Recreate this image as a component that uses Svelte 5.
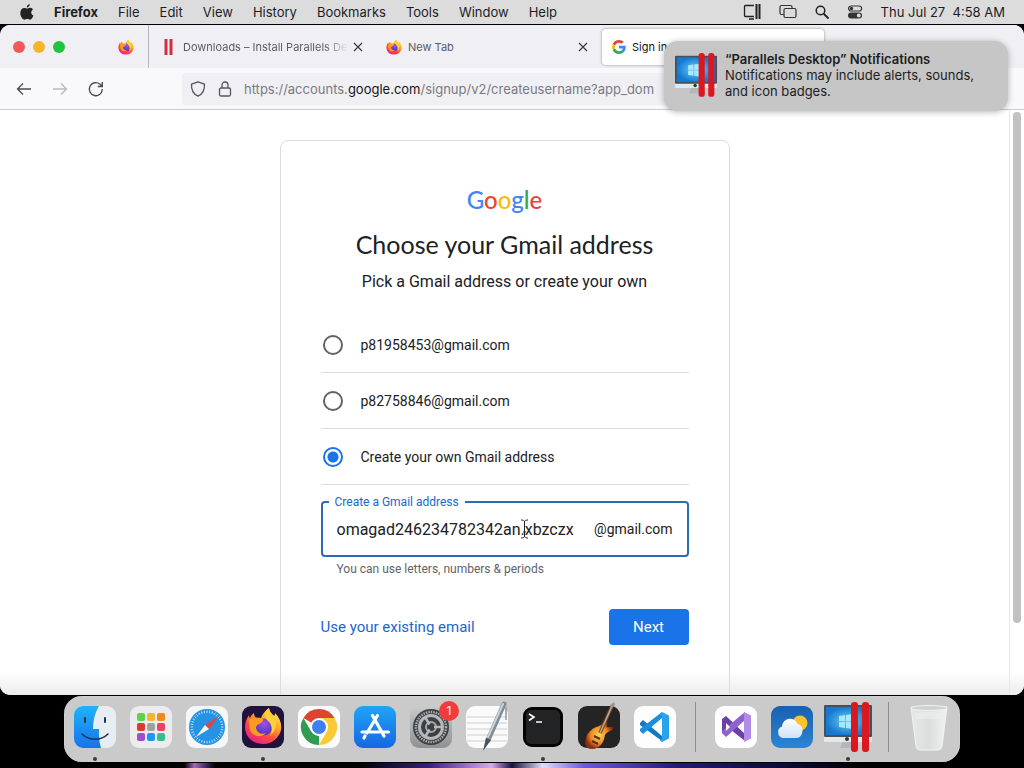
<script>
	import { onMount } from 'svelte';

	let menus = ['File', 'Edit', 'View', 'History', 'Bookmarks', 'Tools', 'Window', 'Help'];

	let suggestions = ['p81958453@gmail.com', 'p82758846@gmail.com'];
	let picked = 'own';
	let username = 'omagad246234782342an.xbzczx';

	// launchpad tiles, row by row
	let tiles = ['#5fd24c', '#f5b52e', '#ef8a1d', '#d93a32', '#9aa39c', '#e8455f', '#a44bd0', '#2196ee', '#35bf8e'];

	let ticks = Array.from({ length: 36 }, (_, i) => i * 10);

	let field;
	onMount(() => {
		field.scrollLeft = 0;
	});
</script>

{#snippet firefox(size)}
	<svg width={size} height={size} viewBox="0 0 38 38" aria-hidden="true">
		<defs>
			<linearGradient id="fx-body" x1="0.85" y1="0.05" x2="0.25" y2="1">
				<stop offset="0" stop-color="#fff14a" />
				<stop offset="0.35" stop-color="#ffa52a" />
				<stop offset="0.65" stop-color="#ff4a3c" />
				<stop offset="1" stop-color="#e5208a" />
			</linearGradient>
			<radialGradient id="fx-globe" cx="0.5" cy="0.3" r="0.7">
				<stop offset="0" stop-color="#a04cf0" />
				<stop offset="1" stop-color="#4b37b5" />
			</radialGradient>
		</defs>
		<path fill="url(#fx-body)" d="M25 1c0 3 2 5 5 8 1-1 1-2 1-3 5 5 7 11 6 17-2 8-9 14-18 14C9 37 1 30 1 20c0-5 2-9 4-12 0 1 0 2 1 3 1-3 3-4 4-5 0 2 1 4 2 5h5c2-5 5-8 8-10z" />
		<circle cx="20" cy="20" r="8.500" fill="url(#fx-globe)" />
		<path fill="#ff9a22" d="M5 13c4-3 9-3 14-1 1 1-1 4-4 5-2 1-3 2-3 4 1 5 6 7 10 5-5 6-14 3-16-3-1-4-1-7-1-10z" />
		<path fill="#ffce38" d="M25 1c0 3 2 5 5 8 4 7 2 15-4 20 3-6 2-12-2-15-4-4-4-9 1-13z" />
	</svg>
{/snippet}

{#snippet parallels(width)}
	<svg {width} viewBox="0 0 48 50" aria-hidden="true">
		<defs>
			<radialGradient id="pd-screen">
				<stop offset="0" stop-color="#6cd4fb" />
				<stop offset="1" stop-color="#1579cf" />
			</radialGradient>
		</defs>
		<path fill="#b4b6b9" d="M19 39h13l3 7H16z" />
		<rect y="3" width="48" height="37" rx="1" fill="#e6e7e8" />
		<rect y="3" width="48" height="32" rx="1" fill="#46515c" />
		<rect x="2" y="5" width="44" height="28" fill="url(#pd-screen)" />
		<path fill="#a9e8ff" d="M15 14l6-1v6h-6zM22 13l7-1v7h-7zM15 20h6v6l-6-1zM22 20h7v7l-7-1z" />
		<circle cx="23" cy="37" r="2" fill="#333" />
		<rect x="27" y="0" width="7" height="50" rx="3" fill="#dc1720" />
		<rect x="38" y="0" width="7" height="50" rx="3" fill="#dc1720" />
	</svg>
{/snippet}

{#snippet cross()}
	<svg width="10" height="10" viewBox="0 0 10 10" aria-hidden="true">
		<path d="M1 1l8 8M9 1L1 9" stroke="#3a3a42" stroke-width="1.200" />
	</svg>
{/snippet}

<div class="desktop">
	<header class="menubar">
		<svg class="apple" width="14" height="16" viewBox="0 0 14 16" aria-hidden="true">
			<path fill="#222" d="M9.700 0c.2 1.600-1.100 3.500-2.900 3.600C6.600 2 8 .3 9.700 0zM7 4.600c.7 0 1.600-.8 3-.8 1.300 0 2.400.7 3 1.600-2.600 1.500-2.200 5 .5 6.100-.6 1.700-2 4.200-3.600 4.200-1 0-1.400-.6-2.700-.6s-1.800.6-2.700.6C2.500 15.700.3 12.200.3 9c0-3.300 2-5.100 4-5.100 1.200 0 2.100.7 2.700.7z" />
		</svg>
		<nav>
			<b>Firefox</b>
			{#each menus as menu}
				<span>{menu}</span>
			{/each}
		</nav>
		<div class="status">
			<svg width="18" height="16" viewBox="0 0 18 16" fill="none" stroke="#222" aria-hidden="true">
				<path d="M11 1.500H2.500a1 1 0 0 0-1 1v9a1 1 0 0 0 1 1H11M6 15h5" stroke-width="1.300" />
				<path d="M13.500 0v15M16.500 0v15" stroke-width="2" />
			</svg>
			<svg width="18" height="16" viewBox="0 0 18 16" fill="none" stroke="#333" stroke-width="1.200" aria-hidden="true">
				<path d="M4.500 10.500h-2a1.500 1.500 0 0 1-1.500-1.500V3a1.500 1.500 0 0 1 1.500-1.500h9A1.500 1.500 0 0 1 13 3v1" />
				<rect x="5" y="4.500" width="12" height="9" rx="1.500" />
			</svg>
			<svg width="14" height="14" viewBox="0 0 14 14" fill="none" stroke="#222" aria-hidden="true">
				<circle cx="5.500" cy="5.500" r="4.300" stroke-width="1.500" />
				<path d="M9 9l4 4" stroke-width="1.800" stroke-linecap="round" />
			</svg>
			<svg width="16" height="14" viewBox="0 0 16 14" aria-hidden="true">
				<rect x="1.600" y="1" width="13" height="5" rx="2.500" fill="none" stroke="#333" stroke-width="1.200" />
				<circle cx="4.500" cy="3.500" r="1.700" fill="#333" />
				<rect x="1" y="7.500" width="14" height="6" rx="3" fill="#333" />
				<circle cx="11.800" cy="10.500" r="1.900" fill="#ddd" />
			</svg>
			<time>Thu Jul 27&nbsp; 4:58 AM</time>
		</div>
	</header>

	<main class="window">
		<div class="tabs">
			<div class="pinned">
				<button class="light red" aria-label="Close window"></button>
				<button class="light yellow" aria-label="Minimize window"></button>
				<button class="light green" aria-label="Zoom window"></button>
				<span class="pin">{@render firefox(16)}</span>
			</div>
			<div class="tab">
				<svg width="16" height="16" viewBox="0 0 16 16" aria-hidden="true">
					<path d="M5 0v16M10 0v16" stroke="#d12f44" stroke-width="3" />
				</svg>
				<span class="title fade">Downloads – Install Parallels De</span>
				<button class="close" aria-label="Close tab">{@render cross()}</button>
			</div>
			<div class="tab">
				{@render firefox(16)}
				<span class="title">New Tab</span>
				<button class="close" aria-label="Close tab">{@render cross()}</button>
			</div>
			<div class="tab active">
				<svg width="14" height="14" viewBox="0 0 48 48" aria-hidden="true">
					<path fill="#ea4335" d="M24 9.500c3.500 0 6.700 1.200 9.200 3.600l6.900-6.900C35.900 2.400 30.500 0 24 0 14.600 0 6.500 5.400 2.600 13.200l8 6.200C12.400 13.700 17.700 9.500 24 9.500z" />
					<path fill="#4285f4" d="M47 24.600c0-1.600-.2-3.100-.4-4.600H24v9h12.900c-.6 3-2.300 5.500-4.800 7.200l7.700 6C44.400 38 47 31.800 47 24.600z" />
					<path fill="#fbbc05" d="M10.500 28.600a14.500 14.500 0 0 1 0-9.200l-8-6.200a24 24 0 0 0 0 21.600z" />
					<path fill="#34a853" d="M24 48c6.500 0 11.900-2.100 15.900-5.800l-7.700-6c-2.200 1.500-4.900 2.300-8.200 2.300-6.300 0-11.600-4.200-13.500-9.900l-8 6.200C6.500 42.600 14.600 48 24 48z" />
				</svg>
				<span class="title">Sign in</span>
			</div>
		</div>

		<div class="toolbar">
			<button class="tool" aria-label="Back">
				<svg width="16" height="14" viewBox="0 0 16 14" fill="none" stroke="#4a4a52" stroke-width="1.300"><path d="M15 7H1.500M7 1.500L1.500 7 7 12.500" /></svg>
			</button>
			<button class="tool" aria-label="Forward">
				<svg width="16" height="14" viewBox="0 0 16 14" fill="none" stroke="#b8b8be" stroke-width="1.300"><path d="M1 7h13.500M9 1.500L14.500 7 9 12.500" /></svg>
			</button>
			<button class="tool" aria-label="Reload">
				<svg width="16" height="16" viewBox="0 0 16 16" fill="none" stroke="#4a4a52" stroke-width="1.400"><path d="M14.300 8A6.500 6.500 0 1 1 12 3.200l1.700 1.600M14.300 1v4.500H9.800" /></svg>
			</button>
			<div class="url">
				<svg width="16" height="16" viewBox="0 0 16 16" fill="none" stroke="#55555e" stroke-width="1.300" aria-hidden="true">
					<path d="M8 .8l6.500 2.400c.3 5.500-1.800 9.800-6.500 12C3.300 13 1.200 8.700 1.500 3.200z" stroke-linejoin="round" />
				</svg>
				<svg width="14" height="16" viewBox="0 0 14 16" fill="none" stroke="#55555e" stroke-width="1.300" aria-hidden="true">
					<rect x="1.500" y="7" width="11" height="8" rx="1.500" />
					<path d="M4 7V4a3 3 0 0 1 6 0v3" />
				</svg>
				<span class="address">https://accounts.<b>google.com</b>/signup/v2/createusername?app_dom</span>
			</div>
		</div>

		<div class="page">
			<div class="content">
				<form class="card" on:submit|preventDefault>
					<div class="logo" aria-label="Google"><span class="b">G</span><span class="r">o</span><span class="y">o</span><span class="b">g</span><span class="g">l</span><span class="r">e</span></div>
					<h1>Choose your Gmail address</h1>
					<p class="sub">Pick a Gmail address or create your own</p>

					<div class="options">
						{#each suggestions as address}
							<label>
								<input type="radio" name="address" value={address} bind:group={picked} />
								{address}
							</label>
						{/each}
						<label>
							<input type="radio" name="address" value="own" bind:group={picked} />
							Create your own Gmail address
						</label>
					</div>

					<div class="field">
						<label for="username">Create a Gmail address</label>
						<input id="username" type="text" spellcheck="false" bind:value={username} bind:this={field} />
						<span>@gmail.com</span>
						<svg class="cursor" width="9" height="20" viewBox="0 0 9 20" fill="none" stroke="#222" aria-hidden="true">
							<path d="M1 1c2 0 3.500.5 3.500 2v14c0 1.500-1.500 2-3.500 2M8 1c-2 0-3.500.5-3.500 2v14c0 1.500 1.500 2 3.500 2M3 13h3" />
						</svg>
					</div>
					<p class="hint">You can use letters, numbers &amp; periods</p>

					<div class="actions">
						<a href="#existing">Use your existing email</a>
						<button type="submit">Next</button>
					</div>
				</form>
			</div>
			<div class="scrollbar"><div class="thumb"></div></div>
		</div>
	</main>

	<footer class="dock">
		<div class="app running">
			<svg viewBox="0 0 42 42" aria-hidden="true">
				<defs>
					<linearGradient id="finder" x2="0" y2="1"><stop stop-color="#20b2fb" /><stop offset="1" stop-color="#1673e8" /></linearGradient>
				</defs>
				<rect width="42" height="42" rx="9" fill="#e6edf3" />
				<path fill="url(#finder)" d="M9 0h16c-4 7-6 14-6 23h6c-.3 7 .2 13 2 19H9a9 9 0 0 1-9-9V9a9 9 0 0 1 9-9z" />
				<path d="M11 12v4M31 12v4" stroke="#1d3550" stroke-width="2" stroke-linecap="round" />
				<path d="M8 28c7 7 19 7 26 0" fill="none" stroke="#1d3550" stroke-width="1.600" stroke-linecap="round" />
			</svg>
		</div>
		<div class="app">
			<svg viewBox="0 0 42 42" aria-hidden="true">
				<rect width="42" height="42" rx="9" fill="#ececee" />
				{#each tiles as color, i}
					<rect x={7 + (i % 3) * 10} y={7 + Math.floor(i / 3) * 10} width="8" height="8" rx="2" fill={color} />
				{/each}
			</svg>
		</div>
		<div class="app">
			<svg viewBox="0 0 42 42" aria-hidden="true">
				<rect width="42" height="42" rx="9" fill="#f5f6f7" />
				<circle cx="21" cy="21" r="18" fill="#2593e4" />
				{#each ticks as angle}
					<path d="M21 4.500v2.500" stroke="#d9eefc" stroke-width="0.800" transform="rotate({angle} 21 21)" />
				{/each}
				<path fill="#e84040" d="M33 10L19 19l4 4z" />
				<path fill="#f4f4f4" d="M10 31l9-12 4 4z" />
			</svg>
		</div>
		<div class="app running">
			<svg viewBox="0 0 42 42" aria-hidden="true">
				<rect width="42" height="42" rx="9" fill="#20123c" />
				<g transform="translate(2 1)">{@render firefox(38)}</g>
			</svg>
		</div>
		<div class="app">
			<svg viewBox="0 0 42 42" aria-hidden="true">
				<rect width="42" height="42" rx="9" fill="#fbfbfb" />
				<path fill="#dd4434" d="M21 21L5.400 12a18 18 0 0 1 31.200 0z" />
				<path fill="#2f9c50" d="M21 21v18A18 18 0 0 1 5.400 12l7.800 13.500z" />
				<path fill="#fbc934" d="M21 12h15.600A18 18 0 0 1 21 39l7.800-13.500z" />
				<circle cx="21" cy="21" r="9" fill="#fff" />
				<circle cx="21" cy="21" r="7" fill="#3e7ff0" />
			</svg>
		</div>
		<div class="app">
			<svg viewBox="0 0 42 42" aria-hidden="true">
				<defs>
					<linearGradient id="store" x2="0" y2="1"><stop stop-color="#1fa5f7" /><stop offset="1" stop-color="#1667e2" /></linearGradient>
				</defs>
				<rect width="42" height="42" rx="9" fill="url(#store)" />
				<path d="M18.500 9.500L30 30M23.500 9.500L13 27M8 26h17M29 26h5.500M11 30l-1 2" stroke="#fff" stroke-width="3.200" stroke-linecap="round" />
			</svg>
		</div>
		<div class="app">
			<svg viewBox="0 0 42 42" fill="none" aria-hidden="true">
				<defs>
					<linearGradient id="prefs" x2="0" y2="1"><stop stop-color="#c9cccc" /><stop offset="1" stop-color="#8d9192" /></linearGradient>
				</defs>
				<rect width="42" height="42" rx="9" fill="url(#prefs)" />
				<circle cx="21" cy="21" r="18" fill="#3c4042" />
				<circle cx="21" cy="21" r="15" stroke="#a7abad" stroke-width="2.500" stroke-dasharray="1.500 1" />
				<circle cx="21" cy="21" r="11.500" stroke="#b6babb" stroke-width="3" />
				<circle cx="21" cy="21" r="5" stroke="#a3a8aa" stroke-width="2" />
				<path d="M24 21h9M19.500 18.500L15 11M19.500 23.500L15 31" stroke="#b6babb" stroke-width="2.500" />
			</svg>
			<span class="badge">1</span>
		</div>
		<div class="app">
			<svg viewBox="0 0 42 42" aria-hidden="true">
				<rect width="42" height="42" rx="9" fill="#fafafa" />
				<path d="M1 11h40M1 17h40M1 23h40M1 29h40M1 35h40" stroke="#cfcfd1" />
				<path d="M38-2L22 34" stroke="#7f8d99" stroke-width="5" stroke-linecap="round" />
				<path d="M37-2L22 31" stroke="#c9d4dc" stroke-width="2" stroke-linecap="round" />
				<path fill="#4b5258" d="M20 32l5 2-8 11z" />
				<path d="M40 1v13" stroke="#8a98a4" stroke-width="1.500" />
			</svg>
		</div>
		<div class="app running">
			<svg viewBox="0 0 42 42" aria-hidden="true">
				<rect x="1" y="1" width="40" height="40" rx="9" fill="#050505" />
				<rect x="4" y="4" width="34" height="34" rx="5" fill="#222324" />
				<path d="M7 8l5 3-5 3.500M14 16h6" fill="none" stroke="#fff" stroke-width="1.600" />
			</svg>
		</div>
		<div class="app">
			<svg viewBox="0 0 42 42" aria-hidden="true">
				<defs>
					<radialGradient id="guitar"><stop stop-color="#ffd34a" /><stop offset="0.6" stop-color="#f08a24" /><stop offset="1" stop-color="#8a2c0e" /></radialGradient>
				</defs>
				<rect width="42" height="42" rx="9" fill="#252424" />
				<path fill="url(#guitar)" d="M16 22c3-2 5-1 8-4 2-3 4-4 5-2 1 1-1 3 0 5 1 1 5-1 6 1 0 3-6 3-8 7-1 7-5 14-13 14C8 43 6 38 8 32c1-5 5-8 8-10z" />
				<path d="M22 27L34 0" stroke="#6a4632" stroke-width="3.500" />
				<path d="M22 27L34 0" stroke="#c5aa90" stroke-width="1.500" />
				<path fill="#a59486" d="M32-1l4-3 1 3-4 4z" />
				<path d="M16 30l6 3M14 35l6 3" stroke="#57301d" stroke-width="2" />
			</svg>
		</div>
		<div class="app">
			<svg viewBox="0 0 42 42" aria-hidden="true">
				<rect width="42" height="42" rx="9" fill="#fdfdfd" />
				<path fill="#1479c4" d="M6 17l3-3 19 16v5L6 19z" />
				<path fill="#1b8fdd" d="M6 25l3 3 19-16V6L6 23z" />
				<path fill="#2aa3ee" d="M28 6l7 3.500v23L28 36l-2-1.500 2-2V10l-2-2z" />
			</svg>
		</div>
		<div class="rule"></div>
		<div class="app">
			<svg viewBox="0 0 42 42" aria-hidden="true">
				<rect width="42" height="42" rx="9" fill="#fdfdfd" />
				<path fill="#6a3fa6" d="M7 13l4-3 19 18v7L11 20v9l-4-2z" />
				<path fill="#8e62cf" d="M7 27l4 4 19-17V6L7 25z" />
				<path fill="#b18be8" d="M29 6l7 3.500v23L29 36z" />
				<path fill="#fff" d="M29 16v10l-6-5zM11 17v8l4-4z" />
			</svg>
		</div>
		<div class="app">
			<svg viewBox="0 0 42 42" aria-hidden="true">
				<defs>
					<linearGradient id="sky" x2="0" y2="1"><stop stop-color="#1b5fb0" /><stop offset="1" stop-color="#2a86d2" /></linearGradient>
					<linearGradient id="cloud" x2="0" y2="1"><stop stop-color="#fff" /><stop offset="1" stop-color="#cfe3f6" /></linearGradient>
				</defs>
				<rect width="42" height="42" rx="9" fill="url(#sky)" />
				<circle cx="29" cy="17" r="7.500" fill="#f8c52e" />
				<path fill="url(#cloud)" d="M12 32a6 6 0 0 1-1-11.500 8 8 0 0 1 15.500-2.500 6.500 6.500 0 0 1 5 6.500c0 4-2.500 7.500-6 7.500z" />
			</svg>
		</div>
		<div class="app running parallels">{@render parallels(48)}</div>
		<div class="rule"></div>
		<div class="app">
			<svg viewBox="0 0 42 42" aria-hidden="true">
				<defs>
					<linearGradient id="bin"><stop stop-color="#e6e7e7" /><stop offset="0.5" stop-color="#dcdddd" /><stop offset="1" stop-color="#f1f2f2" /></linearGradient>
				</defs>
				<path fill="url(#bin)" stroke="#f3f3f3" d="M3 1l5 39c.3 3 2 4 5 4h16c3 0 4.700-1 5-4l5-39z" />
				<ellipse cx="21" cy="2" rx="18" ry="2.500" fill="#cfd0d0" stroke="#f2f2f2" />
				<path fill="#efefef" d="M7 8c8-3 20-3 28 0l-1 5H8z" opacity="0.600" />
			</svg>
		</div>
	</footer>

	<aside class="notice">
		{@render parallels(42)}
		<div>
			<strong>“Parallels Desktop” Notifications</strong>
			<p>Notifications may include alerts, sounds, and icon badges.</p>
		</div>
	</aside>
</div>

<style>
	:global(body) {
		margin: 0;
		background: #000;
	}

	.desktop {
		position: relative;
		display: flex;
		flex-direction: column;
		height: 100vh;
		overflow: hidden;
		font-family: Inter, "Liberation Sans", sans-serif;
		color: #1d1d1f;
		background:
			linear-gradient(90deg, #000 18%, #a06ac0 19%, #4c2f6c 20%, #000 21%, #000 35%, #3a2080 42%, #d9a8f5 48%, #17123f 50%, #e4dcfa 53%, #6d5ad8 57%, #241a78 66%, #0b0a38 77%, #000 84%) bottom / 100% 5px no-repeat,
			#000;
	}

	button {
		padding: 0;
		border: 0;
		background: none;
		font: inherit;
	}

	svg {
		flex: none;
		display: block;
		overflow: visible;
	}

	/* menu bar */
	.menubar {
		display: flex;
		align-items: center;
		height: 24px;
		padding: 0 19px 0 20px;
		margin-bottom: 1px;
		background: #dcdcdc;
		font-size: 13px;
	}

	nav {
		display: flex;
		gap: 20px;
		margin-left: 20px;
	}

	.status {
		display: flex;
		align-items: center;
		gap: 18px;
		margin-left: auto;
	}

	/* browser window */
	.window {
		flex: 1;
		min-height: 0;
		display: flex;
		flex-direction: column;
		overflow: hidden;
		border-radius: 10px;
		background: #fff;
	}

	.tabs {
		display: flex;
		align-items: center;
		height: 43px;
		background: #f0f0f4;
		font-size: 11px;
		line-height: 16px;
		color: #5b5b66;
	}

	.pinned {
		display: flex;
		align-items: center;
		gap: 8px;
		width: 135px;
		height: 100%;
		padding-left: 13px;
		border-right: 1px solid #b5b5ba;
	}

	.light {
		width: 12px;
		height: 12px;
		border-radius: 50%;
	}

	.red { background: #f0595a; }
	.yellow { background: #f8b52c; }
	.green { background: #1fc33f; }

	.pin {
		margin-left: 45px;
	}

	.tab {
		display: flex;
		align-items: center;
		box-sizing: border-box;
		width: 225px;
		height: 36px;
		padding: 0 7px 0 12px;
		border-radius: 4px;
	}

	.active {
		width: 222px;
		margin-left: 3px;
		padding-left: 10px;
		background: #fff;
		color: #15141a;
		box-shadow: 0 0 3px rgba(0, 0, 0, 0.4);
	}

	.title {
		flex: 1;
		margin-left: 6px;
		white-space: nowrap;
	}

	.fade {
		mask-image: linear-gradient(90deg, #000 85%, transparent);
	}

	.close {
		padding: 4px;
	}

	.toolbar {
		display: flex;
		align-items: center;
		gap: 20px;
		height: 41px;
		padding: 1px 180px 0 16px;
		border-bottom: 1px solid #ccccd0;
		box-sizing: border-box;
		height: 42px;
		background: #f9f9fb;
	}

	.url {
		flex: 1;
		min-width: 0;
		display: flex;
		align-items: center;
		gap: 12px;
		height: 32px;
		margin-left: 58px;
		padding-left: 8px;
		border-radius: 4px;
		background: #f0f0f4;
		font-size: 13px;
		color: #7a7a82;
	}

	.address {
		white-space: nowrap;
	}

	.address b {
		font-weight: 400;
		color: #15141a;
	}

	/* sign-up page */
	.page {
		flex: 1;
		min-height: 0;
		display: flex;
		background: linear-gradient(#fff 96%, #ececec);
		font-family: Roboto, "Liberation Sans", sans-serif;
		color: #202124;
	}

	.content {
		flex: 1;
		overflow: hidden;
	}

	.card {
		box-sizing: border-box;
		width: 450px;
		margin: 30px auto 0;
		padding: 43px 40px 60px;
		border: 1px solid #dadce0;
		border-radius: 8px;
		text-align: center;
	}

	.logo {
		font: 500 24px/32px Lato, sans-serif;
	}

	.b { color: #4285f4; }
	.r { color: #ea4335; }
	.y { color: #fbbc05; }
	.g { color: #34a853; }

	h1 {
		margin: 12px 0 0;
		font: 400 25px/32px Lato, sans-serif;
	}

	.sub {
		margin: 10px 0 0;
		font-size: 16px;
		line-height: 24px;
	}

	.options {
		margin-top: 23px;
		text-align: left;
	}

	.options label {
		display: flex;
		align-items: center;
		gap: 18px;
		height: 55px;
		border-bottom: 1px solid #dadce0;
		font-size: 14px;
	}

	input[type="radio"] {
		appearance: none;
		box-sizing: border-box;
		width: 20px;
		height: 20px;
		margin: 0 0 0 2px;
		border: 2px solid #5f6368;
		border-radius: 50%;
	}

	input[type="radio"]:checked {
		border-color: #1a73e8;
		background: radial-gradient(circle, #1a73e8 5px, transparent 6px);
	}

	.field {
		position: relative;
		display: flex;
		align-items: center;
		box-sizing: border-box;
		height: 56px;
		margin-top: 16px;
		padding: 0 14px;
		border: 2px solid #2c6bb5;
		border-radius: 4px;
		font-size: 14px;
	}

	.field label {
		position: absolute;
		top: -9px;
		left: 6px;
		padding: 0 6px;
		background: #fff;
		font-size: 12px;
		line-height: 16px;
		color: #1a66cf;
	}

	.field input {
		flex: 1;
		min-width: 0;
		padding: 0;
		border: 0;
		outline: 0;
		background: none;
		font: inherit;
		font-size: 16px;
		color: inherit;
	}

	.cursor {
		position: absolute;
		top: 16px;
		left: 197px;
	}

	.hint {
		margin: 4px 0 0;
		padding-left: 16px;
		font-size: 12px;
		line-height: 16px;
		text-align: left;
		color: #5f6368;
	}

	.actions {
		display: flex;
		align-items: center;
		justify-content: space-between;
		margin-top: 32px;
		font-size: 15px;
	}

	.actions a {
		color: #1a66cf;
		text-decoration: none;
	}

	.actions button {
		width: 80px;
		height: 36px;
		border-radius: 4px;
		background: #1a73e8;
		color: #fff;
	}

	.scrollbar {
		width: 8px;
		padding: 2px 3px;
		border-left: 1px solid #e8e8e8;
	}

	.thumb {
		height: 88%;
		border-radius: 4px;
		background: #c1c1c1;
	}

	/* dock */
	.dock {
		display: flex;
		align-items: center;
		align-self: center;
		gap: 14px;
		box-sizing: border-box;
		height: 66px;
		margin: 1px 0 6px;
		padding: 0 10px 4px;
		border-radius: 18px;
		background: #cacaca;
		box-shadow: inset 0 0 1px #fff;
	}

	.app {
		position: relative;
		width: 42px;
		height: 42px;
	}

	.parallels {
		display: flex;
		align-items: center;
		justify-content: center;
	}

	.running::after {
		content: "";
		position: absolute;
		left: 19px;
		bottom: -13px;
		width: 4px;
		height: 4px;
		border-radius: 50%;
		background: #3c3c3c;
	}

	.badge {
		position: absolute;
		top: -5px;
		right: -7px;
		width: 20px;
		border-radius: 10px;
		background: #f13c3d;
		color: #fff;
		font-size: 12px;
		line-height: 20px;
		text-align: center;
	}

	.rule {
		width: 1px;
		height: 50px;
		margin: 0 5px;
		background: #8c8c8c;
	}

	/* notification banner */
	.notice {
		position: absolute;
		top: 41px;
		right: 16px;
		display: flex;
		align-items: center;
		gap: 8px;
		box-sizing: border-box;
		width: 344px;
		height: 70px;
		padding: 0 20px 2px 11px;
		border-radius: 14px;
		background: #c6c6c6;
		box-shadow: 0 1px 6px rgba(0, 0, 0, 0.3);
		font-size: 13px;
		line-height: 16px;
	}

	.notice strong {
		font-weight: 600;
	}

	.notice p {
		margin: 0;
	}
</style>
